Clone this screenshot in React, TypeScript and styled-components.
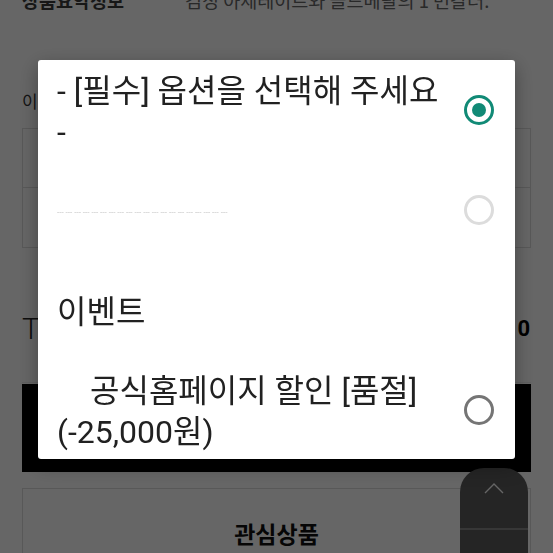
import React from "react";
import styled, { createGlobalStyle } from "styled-components";

const Global = createGlobalStyle`
  html, body { margin: 0; padding: 0; background: #fff; overflow: hidden; }
  body { font-family: "Noto Sans CJK KR", "Noto Sans", sans-serif; }
`;

const Page = styled.div`
  width: 553px;
  height: 553px;
  overflow: hidden;
  display: flex;
  flex-direction: column;
  padding: 0 22px;
  box-sizing: border-box;
  color: #222;
  & > * {
    flex-shrink: 0;
  }
`;

const InfoRow = styled.div`
  display: flex;
  margin-top: -12px;
  height: 24px;
  align-items: center;
  font-size: 18.5px;
  line-height: 24px;
`;

const InfoLabel = styled.div`
  width: 163px;
  font-weight: 600;
  color: #3a3a3a;
`;

const InfoValue = styled.div`
  color: #666;
  white-space: nowrap;
`;

const FieldLabel = styled.div`
  margin-top: 77px;
  font-size: 17px;
  line-height: 24px;
  color: #333;
`;

const SelectBox = styled.div<{ $first?: boolean }>`
  height: 60px;
  box-sizing: border-box;
  margin-top: ${(p) => (p.$first ? "15px" : "0")};
  border: 1px solid #ddd;
  border-top-width: ${(p) => (p.$first ? "1px" : "0")};
  background: #fff;
`;

const TotalRow = styled.div`
  margin-top: 62px;
  display: flex;
  justify-content: space-between;
  align-items: center;
  height: 36px;
  padding-right: 1px;
  font-family: "Roboto", "Noto Sans CJK KR", sans-serif;
`;

const TotalLabel = styled.div`
  font-size: 30px;
  font-weight: 300;
  color: #222;
`;

const TotalValue = styled.div`
  font-size: 22px;
  font-weight: 700;
  color: #000;
`;

const Divider = styled.div`
  margin-top: 36px;
  height: 1px;
  background: #eee;
`;

const BuyButton = styled.div`
  margin-top: 1px;
  height: 88px;
  background: #000;
  color: #fff;
  display: flex;
  align-items: center;
  justify-content: center;
  font-size: 22px;
  font-weight: 700;
`;

const WishButton = styled.div`
  margin-top: 16px;
  height: 90px;
  border: 1px solid #ddd;
  background: #fff;
  display: flex;
  align-items: flex-start;
  justify-content: center;
  padding-top: 27px;
  box-sizing: border-box;
  font-size: 23px;
  font-weight: 700;
  color: #111;
`;

const ScrollTop = styled.div`
  position: fixed;
  left: 460px;
  top: 468px;
  width: 68px;
  height: 100px;
  background: #5d5d5d;
  border-radius: 24px 24px 0 0;
  display: flex;
  flex-direction: column;
  align-items: center;
`;

const ScrollIcon = styled.div`
  height: 62px;
  width: 100%;
  display: flex;
  align-items: center;
  justify-content: center;
  border-bottom: 2px solid #8a8a8a;
  box-sizing: border-box;
  padding-bottom: 20px;
`;

const Overlay = styled.div`
  position: fixed;
  inset: 0;
  background: rgba(0, 0, 0, 0.6);
`;

const Dialog = styled.div`
  position: fixed;
  left: 38px;
  top: 60px;
  width: 477px;
  height: 399px;
  background: #fff;
  border-radius: 3px;
  box-shadow: 0 6px 20px rgba(0, 0, 0, 0.35);
  overflow: hidden;
  display: flex;
  flex-direction: column;
  font-family: "Roboto", "Noto Sans CJK KR", sans-serif;
`;

const OptionRow = styled.div`
  height: 100px;
  flex-shrink: 0;
  display: flex;
  align-items: center;
  padding: 0 21px 0 19px;
  gap: 10px;
`;

const OptionText = styled.div<{ $indent?: boolean }>`
  flex: 1;
  font-size: 32px;
  line-height: 41px;
  color: #212121;
  white-space: pre-line;
  text-indent: ${(p) => (p.$indent ? "33px" : "0")};
  padding-top: 4px;
`;

const DashText = styled.div`
  flex: 1;
  font-size: 8px;
  line-height: 10px;
  color: #c4c4c4;
  white-space: pre;
  overflow: hidden;
  padding-top: 6px;
`;

const Radio = styled.span<{ $state: "checked" | "off" | "disabled" }>`
  width: 30px;
  height: 30px;
  box-sizing: border-box;
  border-radius: 50%;
  flex-shrink: 0;
  border: 3px solid
    ${(p) =>
      p.$state === "checked" ? "#118a76" : p.$state === "off" ? "#757575" : "#dcdcdc"};
  display: flex;
  align-items: center;
  justify-content: center;
  &::after {
    content: "";
    width: 14px;
    height: 14px;
    border-radius: 50%;
    background: ${(p) => (p.$state === "checked" ? "#118a76" : "transparent")};
  }
`;

export default function App() {
  return (
    <>
      <Global />
      <Page>
        <InfoRow>
          <InfoLabel>상품요약정보</InfoLabel>
          <InfoValue>검정 아세테이트와 골드메탈의 1 번갈러.</InfoValue>
        </InfoRow>
        <FieldLabel>이벤트</FieldLabel>
        <SelectBox $first />
        <SelectBox />
        <TotalRow>
          <TotalLabel>TOTAL</TotalLabel>
          <TotalValue>0</TotalValue>
        </TotalRow>
        <Divider />
        <BuyButton>구매하기</BuyButton>
        <WishButton>관심상품</WishButton>
      </Page>
      <ScrollTop>
        <ScrollIcon>
          <svg width="20" height="11" viewBox="0 0 20 11" fill="none">
            <path d="M1 10 L10 1 L19 10" stroke="#fff" strokeWidth="1.4" />
          </svg>
        </ScrollIcon>
      </ScrollTop>
      <Overlay />
      <Dialog>
        <OptionRow>
          <OptionText>{"- [필수] 옵션을 선택해 주세요\n-"}</OptionText>
          <Radio $state="checked" />
        </OptionRow>
        <OptionRow>
          <DashText>{"--- ".repeat(20)}</DashText>
          <Radio $state="disabled" />
        </OptionRow>
        <OptionRow>
          <OptionText>이벤트</OptionText>
        </OptionRow>
        <OptionRow>
          <OptionText $indent>{"공식홈페이지 할인 [품절]\n(-25,000원)"}</OptionText>
          <Radio $state="off" />
        </OptionRow>
      </Dialog>
    </>
  );
}
